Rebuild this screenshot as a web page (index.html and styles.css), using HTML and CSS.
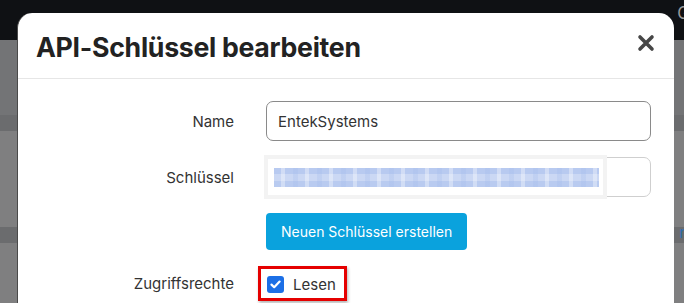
FILE: index.html
```html
<!DOCTYPE html>
<html lang="de">
<head>
<meta charset="UTF-8">
<meta name="viewport" content="width=device-width, initial-scale=1.0">
<title>API-Schlüssel bearbeiten</title>
<link rel="stylesheet" href="styles.css">
</head>
<body>
<div class="topbar"><span class="topbar-text">G</span></div>
<div class="page">
<div class="band band-top"></div>
<div class="band band-dark"></div>
<div class="band band-mid"></div>
<div class="band band-dark"></div>
<div class="band band-rest"><span class="side-link">n</span></div>
</div>

<div class="modal">
<div class="modal-header">
<h2>API-Schlüssel bearbeiten</h2>
<span class="close"><svg width="18" height="18" viewBox="0 0 18 18"><path d="M3 3 L15 15 M15 3 L3 15" stroke="#474747" stroke-width="3.6" stroke-linecap="round"/></svg></span>
</div>
<div class="modal-body">
<div class="form-row">
<label for="name">Name</label>
<input type="text" id="name" class="field field-active" value="EntekSystems">
</div>
<div class="form-row">
<label for="key">Schlüssel</label>
<div class="key-wrap">
<input type="text" id="key" class="field" value="">
<div class="blur-box"><div class="blur-strip"></div></div>
</div>
</div>
<div class="form-row">
<span></span>
<div><button type="button" class="btn">Neuen Schlüssel erstellen</button></div>
</div>
<div class="form-row">
<label>Zugriffsrechte</label>
<div>
<span class="mark">
<span class="check"><svg width="11" height="9" viewBox="0 0 11 9"><path d="M1.5 4.6 L4.2 7.2 L9.6 1.6" fill="none" stroke="#fff" stroke-width="2.2" stroke-linecap="round" stroke-linejoin="round"/></svg></span>
<span class="check-label">Lesen</span>
</span>
</div>
</div>
</div>
</div>
</body>
</html>
```

FILE: styles.css
```css
body {
font-family: Inter, "Noto Sans", sans-serif;
margin: 0;
padding: 0;
background-color: #7f7f80;
overflow: hidden;
height: 303px;
}

.topbar {
height: 40px;
background-color: #0f1114;
position: relative;
}

.topbar-text {
position: absolute;
right: -6px;
top: 3px;
color: #9a9a9a;
font-size: 17px;
}

.page {
display: flex;
flex-direction: column;
height: 263px;
overflow: hidden;
}

.band-top {
height: 75px;
flex: none;
background-color: #737476;
}

.band-dark {
height: 16px;
flex: none;
background-color: #6b6c6e;
}

.band-mid {
height: 96px;
flex: none;
background-color: #7f7f80;
}

.band-rest {
flex: 1;
background-color: #7f7f80;
position: relative;
}

.side-link {
position: absolute;
right: -4px;
top: -20px;
color: #2d6fb0;
font-size: 15px;
}

.modal {
position: absolute;
left: 17px;
top: 13px;
width: 657px;
height: 290px;
overflow: hidden;
background-color: #fff;
border-radius: 15px 15px 0 0;
border-left: 1px solid #4a4a4a;
box-sizing: border-box;
}

.modal-header {
height: 65px;
border-bottom: 1px solid #e6e6e6;
display: flex;
align-items: center;
justify-content: space-between;
padding: 0 19px 0 18px;
}

.modal-header h2 {
margin: 0;
font-size: 26.7px;
font-weight: 700;
color: #222;
letter-spacing: -0.3px;
padding-top: 2px;
}

.close {
display: flex;
margin-top: -6px;
}

.modal-body {
padding: 22px 23px 0 0;
display: flex;
flex-direction: column;
gap: 16px;
}

.form-row {
display: grid;
grid-template-columns: 216px 1fr;
column-gap: 32px;
align-items: center;
}

.form-row label {
text-align: right;
font-size: 15px;
color: #333;
}

.field {
width: 100%;
height: 40px;
box-sizing: border-box;
border: 1px solid #cfcfcf;
border-radius: 7px;
padding: 0 11px;
font-family: Inter, "Noto Sans", sans-serif;
font-size: 15px;
color: #333;
}

.field-active {
border-color: #8a8a8a;
}

.key-wrap {
position: relative;
}

.blur-box {
position: absolute;
left: -2px;
top: -2px;
width: 343px;
height: 44px;
background-color: #f3f3f3;
padding: 4px;
box-sizing: border-box;
}

.blur-strip {
background-color: #fff;
height: 100%;
padding: 9px 4px 8px 6px;
box-sizing: border-box;
}

.blur-strip::before {
content: "";
display: block;
height: 100%;
background:
repeating-linear-gradient(90deg, rgba(255,255,255,0) 0 7px, rgba(255,255,255,0.35) 7px 11px, rgba(255,255,255,0) 11px 19px, rgba(160,185,235,0.25) 19px 24px),
linear-gradient(180deg, #b8caf0 0 30%, #cbd8f4 30% 70%, #b9cbf0 70%);
}

.btn {
background-color: #0aa2dd;
color: #fff;
border: none;
border-radius: 4px;
height: 37px;
padding: 0 15px;
font-family: Inter, "Noto Sans", sans-serif;
font-size: 14px;
cursor: pointer;
}

.mark {
display: inline-flex;
align-items: center;
gap: 9px;
border: 3px solid #e50000;
padding: 6px 8px 4px 6px;
margin-left: -8px;
box-shadow: 1px 2px 3px rgba(0,0,0,0.3);
}

.check {
width: 17px;
height: 17px;
background-color: #1c6fe6;
border-radius: 3px;
display: flex;
align-items: center;
justify-content: center;
}

.check-label {
font-size: 15px;
color: #333;
}
```
